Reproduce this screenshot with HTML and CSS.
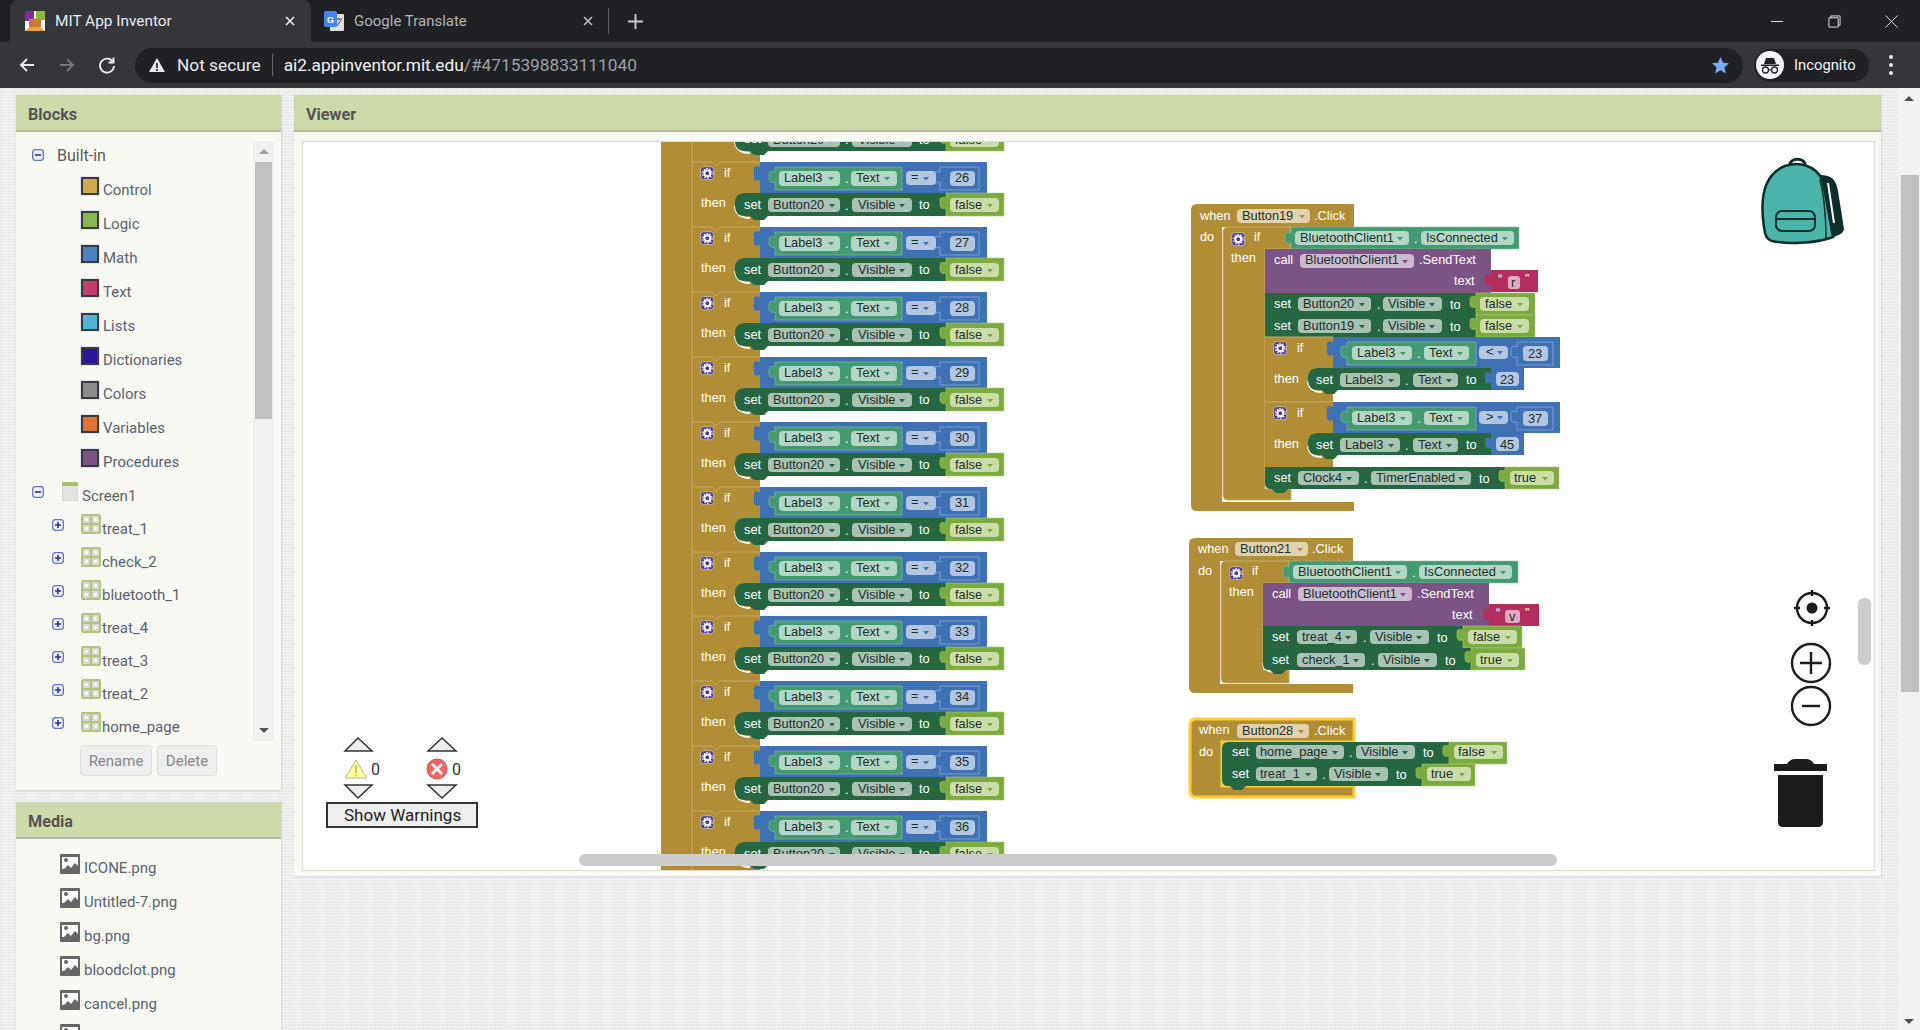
FILE: index.html
```html
<!DOCTYPE html>
<html lang="en">
<head>
<meta charset="utf-8">
<title>MIT App Inventor</title>
<link rel="stylesheet" href="styles.css">
</head>
<body>
<svg class="sprites" width="0" height="0" aria-hidden="true">
  <symbol id="i-minus" viewBox="0 0 12 12"><rect x=".7" y=".7" width="10.6" height="10.6" rx="2.5" fill="#eef0fb" stroke="#6672c8" stroke-width="1.3"/><path d="M3 6h6" stroke="#2a2f90" stroke-width="1.6"/></symbol>
  <symbol id="i-plus" viewBox="0 0 12 12"><rect x=".7" y=".7" width="10.6" height="10.6" rx="2.5" fill="#eef0fb" stroke="#6672c8" stroke-width="1.3"/><path d="M3 6h6M6 3v6" stroke="#2a2f90" stroke-width="1.6"/></symbol>
  <symbol id="i-arr" viewBox="0 0 20 20"><rect width="20" height="20" rx="2" fill="#b2c57a"/><rect x="2" y="2" width="7" height="7" rx="1" fill="#d8d8d8"/><rect x="11" y="2" width="7" height="7" rx="1" fill="#d8d8d8"/><rect x="2" y="11" width="7" height="7" rx="1" fill="#d8d8d8"/><rect x="11" y="11" width="7" height="7" rx="1" fill="#d8d8d8"/><rect x="4" y="4" width="3" height="3" fill="#fff"/><rect x="13" y="4" width="3" height="3" fill="#fff"/><rect x="4" y="13" width="3" height="3" fill="#fff"/><rect x="13" y="13" width="3" height="3" fill="#fff"/></symbol>
  <symbol id="i-img" viewBox="0 0 20 20"><rect width="20" height="20" rx="1" fill="#666"/><path d="M2 15V3h16v9l-3-3-4 5-3-3-4 4z" fill="#fff"/><circle cx="6" cy="6" r="2" fill="#666"/></symbol>
</svg>

<header class="chrome">
  <div class="tabs">
    <div class="tab active">
      <svg class="fav" viewBox="0 0 20 20"><rect width="20" height="20" fill="#fff"/><rect width="9" height="10" fill="#8d2a8f"/><rect x="11" width="9" height="9" fill="#8fb63e"/><rect x="4" y="8" width="12" height="8" fill="#c9793a"/><path d="M0 20l5-4h10l5 4z" fill="#f0a030"/></svg>
      <span class="tab-title">MIT App Inventor</span>
      <svg class="tab-x" viewBox="0 0 10 10"><path d="M1 1l8 8M9 1l-8 8"/></svg>
    </div>
    <div class="tab other">
      <svg class="fav" viewBox="0 0 20 20"><rect x="6" y="3" width="14" height="17" rx="1" fill="#ddd"/><rect width="13" height="16" rx="2" fill="#4285f4"/><path d="M12 8h6M15 7v2M13 15l4-6" stroke="#555" fill="none"/><text class="fav-g" x="3" y="12">G</text></svg>
      <span class="tab-title">Google Translate</span>
      <svg class="tab-x" viewBox="0 0 10 10"><path d="M1 1l8 8M9 1l-8 8"/></svg>
    </div>
    <span class="tab-sep"></span>
    <svg class="new-tab" viewBox="0 0 16 16"><path d="M8 1v14M1 8h14"/></svg>
    <div class="win">
      <svg viewBox="0 0 14 14"><path d="M0 7h13"/></svg>
      <svg viewBox="0 0 14 14"><path d="M3 3V1h10v10h-2M1 3h10v10H1z"/></svg>
      <svg viewBox="0 0 14 14"><path d="M.5.5l13 13M13.500.5l-13 13"/></svg>
    </div>
  </div>
  <div class="toolbar">
    <svg class="nav" viewBox="0 0 18 18"><path d="M16 9H3M9 3L3 9l6 6"/></svg>
    <svg class="nav dim" viewBox="0 0 18 18"><path d="M2 9h13M9 3l6 6-6 6"/></svg>
    <svg class="nav" viewBox="0 0 18 18"><path d="M15 6a7 7 0 1 0 1 4M15.500 1.500V6.500H10.500"/></svg>
    <div class="omni">
      <svg class="warn" viewBox="0 0 16 14"><path d="M8 0l8 14H0z" fill="#e8eaed"/><path d="M8 5v5M8 11v2" stroke="#202124" stroke-width="1.6"/></svg>
      <span class="ns">Not secure</span>
      <span class="omni-sep"></span>
      <span class="url">ai2.appinventor.mit.edu<span class="url-dim">/#4715398833111040</span></span>
      <svg class="star" viewBox="0 0 20 20"><path d="M10 1l2.700 6 6.300.6-4.800 4.300 1.500 6.400L10 14.900 4.300 18.300l1.500-6.400L1 7.600 7.300 7z" fill="#7baaf7"/></svg>
    </div>
    <div class="profile">
      <svg class="avatar" viewBox="0 0 28 28"><circle cx="14" cy="14" r="14" fill="#f1f3f4"/><path d="M10 7h8l2 6H8zM5 13.500h18v1.500H5z" fill="#202124"/><circle cx="9.500" cy="19" r="3" fill="none" stroke="#202124" stroke-width="1.300"/><circle cx="18.500" cy="19" r="3" fill="none" stroke="#202124" stroke-width="1.300"/><path d="M12.500 19h3" stroke="#202124"/></svg>
      <span>Incognito</span>
    </div>
    <div class="kebab"><i></i><i></i><i></i></div>
  </div>
</header>

<main class="page">
  <aside class="side">
    <section class="panel blocks-panel">
      <h2 class="head">Blocks</h2>
      <div class="tree-wrap">
        <div class="tree">
          <div class="row r-top"><svg class="tog"><use href="#i-minus"/></svg><span class="lbl-top">Built-in</span></div>
          <div class="row r-b"><i class="sw s1"></i>Control</div>
          <div class="row r-b"><i class="sw s2"></i>Logic</div>
          <div class="row r-b"><i class="sw s3"></i>Math</div>
          <div class="row r-b"><i class="sw s4"></i>Text</div>
          <div class="row r-b"><i class="sw s5"></i>Lists</div>
          <div class="row r-b"><i class="sw s6"></i>Dictionaries</div>
          <div class="row r-b"><i class="sw s7"></i>Colors</div>
          <div class="row r-b"><i class="sw s8"></i>Variables</div>
          <div class="row r-b"><i class="sw s9"></i>Procedures</div>
          <div class="row r-c r-screen"><svg class="tog"><use href="#i-minus"/></svg><svg class="scr" viewBox="0 0 16 19"><rect width="16" height="19" rx="2" fill="#e4e4e4" stroke="#ccc"/><path d="M0 2a2 2 0 0 1 2-2h12a2 2 0 0 1 2 2v2H0z" fill="#a9bf6a"/></svg>Screen1</div>
          <div class="row r-c"><svg class="tog"><use href="#i-plus"/></svg><svg class="arr"><use href="#i-arr"/></svg>treat_1</div>
          <div class="row r-c"><svg class="tog"><use href="#i-plus"/></svg><svg class="arr"><use href="#i-arr"/></svg>check_2</div>
          <div class="row r-c"><svg class="tog"><use href="#i-plus"/></svg><svg class="arr"><use href="#i-arr"/></svg>bluetooth_1</div>
          <div class="row r-c"><svg class="tog"><use href="#i-plus"/></svg><svg class="arr"><use href="#i-arr"/></svg>treat_4</div>
          <div class="row r-c"><svg class="tog"><use href="#i-plus"/></svg><svg class="arr"><use href="#i-arr"/></svg>treat_3</div>
          <div class="row r-c"><svg class="tog"><use href="#i-plus"/></svg><svg class="arr"><use href="#i-arr"/></svg>treat_2</div>
          <div class="row r-c"><svg class="tog"><use href="#i-plus"/></svg><svg class="arr"><use href="#i-arr"/></svg>home_page</div>
        </div>
        <div class="vbar"><span class="up"></span><span class="thumb"></span><span class="down"></span></div>
      </div>
      <div class="btns"><button class="btn">Rename</button><button class="btn">Delete</button></div>
    </section>
    <section class="panel media-panel">
      <h2 class="head">Media</h2>
      <div class="media">
        <div class="mrow"><svg class="img"><use href="#i-img"/></svg>ICONE.png</div>
        <div class="mrow"><svg class="img"><use href="#i-img"/></svg>Untitled-7.png</div>
        <div class="mrow"><svg class="img"><use href="#i-img"/></svg>bg.png</div>
        <div class="mrow"><svg class="img"><use href="#i-img"/></svg>bloodclot.png</div>
        <div class="mrow"><svg class="img"><use href="#i-img"/></svg>cancel.png</div>
        <div class="mrow"><svg class="img"><use href="#i-img"/></svg></div>
      </div>
    </section>
  </aside>

  <section class="panel viewer">
    <h2 class="head">Viewer</h2>
    <div class="canvas">
      <svg class="ws" viewBox="303 142 1571 728" width="1571" height="728">
        <defs>
          <path id="tri" d="M0 0h6l-3 3.500z"/>
          <g id="gear"><rect x=".7" y=".7" width="13" height="13" rx="3" fill="#4b3a9e" stroke="#c9b98a"/><circle cx="7.300" cy="7.300" r="3" fill="none" stroke="#fff" stroke-width="2"/><circle cx="7.300" cy="7.300" r="4.800" fill="none" stroke="#fff" stroke-width="1.200" stroke-dasharray="1.500 1.500"/></g>
          <g id="ifshape">
            <path class="hl" d="M692 0H712l4 4 4-4H760"/>
            <path class="blue" d="M760 0H987V31H760V18C752 21 754 14 754 11S752 2 760 5Z"/>
            <path class="gr" d="M775 5H902V28H775V20C768 22 769 16 769 14S768 8 775 10Z"/>
            <path class="blue bnum" d="M940 5H979V28H940V20C933 22 934 16 934 14S933 8 940 10Z"/>
            <rect class="pg" x="779" y="9" width="61" height="15" rx="4"/><use class="tg" href="#tri" x="828" y="15"/>
            <rect class="pg" x="851" y="9" width="46" height="15" rx="4"/><use class="tg" href="#tri" x="884" y="15"/>
            <rect class="pb" x="906" y="9" width="30" height="14" rx="4"/><use class="tb" href="#tri" x="923" y="15"/>
            <rect class="pb" x="950" y="9" width="25" height="15" rx="4"/>
            <path class="wh" d="M735 44Q736 56 750 56"/>
            <path class="set" d="M745 31H946V54H768L764 58H754L750 54H745Q735 54 735 44V41Q735 31 745 31Z"/>
            <path class="lime" d="M946 31H1004V54H946V46C939 48 940 42 940 40S939 34 946 36Z"/>
            <rect class="ps" x="768" y="36" width="72" height="14" rx="4"/><use class="ts" href="#tri" x="829" y="42"/>
            <rect class="ps" x="852" y="36" width="60" height="14" rx="4"/><use class="ts" href="#tri" x="899" y="42"/>
            <rect class="pl" x="950" y="36" width="49" height="14" rx="4"/><use class="tl" href="#tri" x="987" y="42"/>
            <use href="#gear" x="700" y="4"/>
          </g>
        </defs>

        <rect class="mus" x="661" y="100" width="99" height="800"/>
        <path class="hl" d="M692 100V900"/>

        <g transform="translate(0,97)"><use href="#ifshape"/><text class="w" x="744" y="46">set</text><text class="d" x="773" y="47">Button20</text><text class="w" x="845" y="47">.</text><text class="d" x="858" y="47">Visible</text><text class="w" x="919" y="47">to</text><text class="d" x="955" y="47">false</text><text class="w" x="701" y="45">then</text></g>
        <g transform="translate(0,162)"><use href="#ifshape"/><text class="w" x="724" y="15">if</text><text class="d" x="784" y="20">Label3</text><text class="w" x="845" y="21">.</text><text class="d" x="856" y="20">Text</text><text class="d" x="911" y="19">=</text><text class="d" x="955" y="20">26</text><text class="w" x="701" y="45">then</text><text class="w" x="744" y="47">set</text><text class="d" x="773" y="47">Button20</text><text class="w" x="845" y="48">.</text><text class="d" x="858" y="47">Visible</text><text class="w" x="919" y="47">to</text><text class="d" x="955" y="47">false</text></g>
        <g transform="translate(0,227)"><use href="#ifshape"/><text class="w" x="724" y="15">if</text><text class="d" x="784" y="20">Label3</text><text class="w" x="845" y="21">.</text><text class="d" x="856" y="20">Text</text><text class="d" x="911" y="19">=</text><text class="d" x="955" y="20">27</text><text class="w" x="701" y="45">then</text><text class="w" x="744" y="47">set</text><text class="d" x="773" y="47">Button20</text><text class="w" x="845" y="48">.</text><text class="d" x="858" y="47">Visible</text><text class="w" x="919" y="47">to</text><text class="d" x="955" y="47">false</text></g>
        <g transform="translate(0,292)"><use href="#ifshape"/><text class="w" x="724" y="15">if</text><text class="d" x="784" y="20">Label3</text><text class="w" x="845" y="21">.</text><text class="d" x="856" y="20">Text</text><text class="d" x="911" y="19">=</text><text class="d" x="955" y="20">28</text><text class="w" x="701" y="45">then</text><text class="w" x="744" y="47">set</text><text class="d" x="773" y="47">Button20</text><text class="w" x="845" y="48">.</text><text class="d" x="858" y="47">Visible</text><text class="w" x="919" y="47">to</text><text class="d" x="955" y="47">false</text></g>
        <g transform="translate(0,357)"><use href="#ifshape"/><text class="w" x="724" y="15">if</text><text class="d" x="784" y="20">Label3</text><text class="w" x="845" y="21">.</text><text class="d" x="856" y="20">Text</text><text class="d" x="911" y="19">=</text><text class="d" x="955" y="20">29</text><text class="w" x="701" y="45">then</text><text class="w" x="744" y="47">set</text><text class="d" x="773" y="47">Button20</text><text class="w" x="845" y="48">.</text><text class="d" x="858" y="47">Visible</text><text class="w" x="919" y="47">to</text><text class="d" x="955" y="47">false</text></g>
        <g transform="translate(0,422)"><use href="#ifshape"/><text class="w" x="724" y="15">if</text><text class="d" x="784" y="20">Label3</text><text class="w" x="845" y="21">.</text><text class="d" x="856" y="20">Text</text><text class="d" x="911" y="19">=</text><text class="d" x="955" y="20">30</text><text class="w" x="701" y="45">then</text><text class="w" x="744" y="47">set</text><text class="d" x="773" y="47">Button20</text><text class="w" x="845" y="48">.</text><text class="d" x="858" y="47">Visible</text><text class="w" x="919" y="47">to</text><text class="d" x="955" y="47">false</text></g>
        <g transform="translate(0,487)"><use href="#ifshape"/><text class="w" x="724" y="15">if</text><text class="d" x="784" y="20">Label3</text><text class="w" x="845" y="21">.</text><text class="d" x="856" y="20">Text</text><text class="d" x="911" y="19">=</text><text class="d" x="955" y="20">31</text><text class="w" x="701" y="45">then</text><text class="w" x="744" y="47">set</text><text class="d" x="773" y="47">Button20</text><text class="w" x="845" y="48">.</text><text class="d" x="858" y="47">Visible</text><text class="w" x="919" y="47">to</text><text class="d" x="955" y="47">false</text></g>
        <g transform="translate(0,552)"><use href="#ifshape"/><text class="w" x="724" y="15">if</text><text class="d" x="784" y="20">Label3</text><text class="w" x="845" y="21">.</text><text class="d" x="856" y="20">Text</text><text class="d" x="911" y="19">=</text><text class="d" x="955" y="20">32</text><text class="w" x="701" y="45">then</text><text class="w" x="744" y="47">set</text><text class="d" x="773" y="47">Button20</text><text class="w" x="845" y="48">.</text><text class="d" x="858" y="47">Visible</text><text class="w" x="919" y="47">to</text><text class="d" x="955" y="47">false</text></g>
        <g transform="translate(0,616)"><use href="#ifshape"/><text class="w" x="724" y="15">if</text><text class="d" x="784" y="20">Label3</text><text class="w" x="845" y="21">.</text><text class="d" x="856" y="20">Text</text><text class="d" x="911" y="19">=</text><text class="d" x="955" y="20">33</text><text class="w" x="701" y="45">then</text><text class="w" x="744" y="47">set</text><text class="d" x="773" y="47">Button20</text><text class="w" x="845" y="48">.</text><text class="d" x="858" y="47">Visible</text><text class="w" x="919" y="47">to</text><text class="d" x="955" y="47">false</text></g>
        <g transform="translate(0,681)"><use href="#ifshape"/><text class="w" x="724" y="15">if</text><text class="d" x="784" y="20">Label3</text><text class="w" x="845" y="21">.</text><text class="d" x="856" y="20">Text</text><text class="d" x="911" y="19">=</text><text class="d" x="955" y="20">34</text><text class="w" x="701" y="45">then</text><text class="w" x="744" y="47">set</text><text class="d" x="773" y="47">Button20</text><text class="w" x="845" y="48">.</text><text class="d" x="858" y="47">Visible</text><text class="w" x="919" y="47">to</text><text class="d" x="955" y="47">false</text></g>
        <g transform="translate(0,746)"><use href="#ifshape"/><text class="w" x="724" y="15">if</text><text class="d" x="784" y="20">Label3</text><text class="w" x="845" y="21">.</text><text class="d" x="856" y="20">Text</text><text class="d" x="911" y="19">=</text><text class="d" x="955" y="20">35</text><text class="w" x="701" y="45">then</text><text class="w" x="744" y="47">set</text><text class="d" x="773" y="47">Button20</text><text class="w" x="845" y="48">.</text><text class="d" x="858" y="47">Visible</text><text class="w" x="919" y="47">to</text><text class="d" x="955" y="47">false</text></g>
        <g transform="translate(0,811)"><use href="#ifshape"/><text class="w" x="724" y="15">if</text><text class="d" x="784" y="20">Label3</text><text class="w" x="845" y="21">.</text><text class="d" x="856" y="20">Text</text><text class="d" x="911" y="19">=</text><text class="d" x="955" y="20">36</text><text class="w" x="701" y="45">then</text><text class="w" x="744" y="47">set</text><text class="d" x="773" y="47">Button20</text><text class="w" x="845" y="48">.</text><text class="d" x="858" y="47">Visible</text><text class="w" x="919" y="47">to</text><text class="d" x="955" y="47">false</text></g>

        <!-- Button19.Click -->
        <g>
          <path class="mus" d="M1197 204H1354V227H1222V502H1354V511H1197Q1191 511 1191 505V210Q1191 204 1197 204Z"/>
          <path class="mus hlf" d="M1228 227H1291V249H1265V489H1291V500H1228Q1223 500 1223 495V232Q1223 227 1228 227Z"/>
          <text class="w" x="1200" y="220">when</text><rect class="pm" x="1237" y="209" width="73" height="14" rx="4"/><text class="d" x="1242" y="220">Button19</text><use class="tm" href="#tri" x="1299" y="215"/><text class="w" x="1314" y="220">.Click</text>
          <text class="w" x="1200" y="241">do</text><use href="#gear" x="1231" y="232"/><text class="w" x="1254" y="241">if</text><text class="w" x="1231" y="262">then</text>
          <path class="gr" d="M1291 227H1519V249H1291V243C1284 245 1285 239 1285 237S1284 231 1291 233Z"/>
          <rect class="pg" x="1295" y="231" width="114" height="14" rx="4"/><text class="d" x="1300" y="242">BluetoothClient1</text><use class="tg" href="#tri" x="1397" y="237"/><text class="w" x="1414" y="243">.</text>
          <rect class="pg" x="1421" y="231" width="93" height="14" rx="4"/><text class="d" x="1426" y="242">IsConnected</text><use class="tg" href="#tri" x="1502" y="237"/>
          <path class="pur" d="M1265 249H1491V293H1265Z"/><text class="w" x="1274" y="264">call</text>
          <rect class="pp" x="1300" y="254" width="114" height="14" rx="4"/><text class="d" x="1305" y="264">BluetoothClient1</text><use class="tp" href="#tri" x="1402" y="260"/><text class="w" x="1419" y="264">.SendText</text><text class="w" x="1454" y="285">text</text>
          <path class="red" d="M1491 270H1538V292H1491V285C1484 287 1485 281 1485 279S1484 273 1491 275Z"/><text class="w" x="1498" y="283">“</text><rect class="pr" x="1508" y="276" width="12" height="13" rx="3"/><text class="d" x="1511" y="287">r</text><text class="w" x="1525" y="283">”</text>

          <path class="set" d="M1265 293H1476V315H1265Z"/><path class="lime" d="M1476 293H1535V315H1476V307C1469 309 1470 303 1470 301S1469 295 1476 297Z"/>
          <text class="w" x="1274" y="308">set</text><rect class="ps" x="1298" y="297" width="73" height="14" rx="4"/><text class="d" x="1303" y="308">Button20</text><use class="ts" href="#tri" x="1359" y="303"/><text class="w" x="1377" y="309">.</text><rect class="ps" x="1383" y="297" width="59" height="14" rx="4"/><text class="d" x="1388" y="308">Visible</text><use class="ts" href="#tri" x="1429" y="303"/><text class="w" x="1450" y="309">to</text><rect class="pl" x="1480" y="297" width="49" height="14" rx="4"/><text class="d" x="1485" y="308">false</text><use class="tl" href="#tri" x="1517" y="303"/>
          <path class="set" d="M1265 315H1476V337H1265Z"/><path class="lime" d="M1476 315H1535V337H1476V329C1469 331 1470 325 1470 323S1469 317 1476 319Z"/>
          <text class="w" x="1274" y="330">set</text><rect class="ps" x="1298" y="319" width="73" height="14" rx="4"/><text class="d" x="1303" y="330">Button19</text><use class="ts" href="#tri" x="1359" y="325"/><text class="w" x="1377" y="331">.</text><rect class="ps" x="1383" y="319" width="59" height="14" rx="4"/><text class="d" x="1388" y="330">Visible</text><use class="ts" href="#tri" x="1429" y="325"/><text class="w" x="1450" y="331">to</text><rect class="pl" x="1480" y="319" width="49" height="14" rx="4"/><text class="d" x="1485" y="330">false</text><use class="tl" href="#tri" x="1517" y="325"/>

          <path class="mus" d="M1265 337H1333V467H1265Z"/>
          <g id="nest1">
            <path class="hl" d="M1265 337H1333"/><use href="#gear" x="1273" y="341"/><text class="w" x="1297" y="352">if</text><text class="w" x="1274" y="383">then</text>
            <path class="blue" d="M1333 337H1560V368H1333V355C1325 358 1327 351 1327 348S1325 339 1333 342Z"/>
            <path class="gr" d="M1347 342H1476V365H1347V357C1340 359 1341 353 1341 351S1340 345 1347 347Z"/>
            <rect class="pg" x="1352" y="346" width="60" height="14" rx="4"/><text class="d" x="1357" y="357">Label3</text><use class="tg" href="#tri" x="1400" y="352"/><text class="w" x="1417" y="358">.</text>
            <rect class="pg" x="1424" y="346" width="45" height="14" rx="4"/><text class="d" x="1429" y="357">Text</text><use class="tg" href="#tri" x="1457" y="352"/>
            <rect class="pb" x="1479" y="346" width="29" height="13" rx="4"/><text class="d" x="1486" y="356">&lt;</text><use class="tb" href="#tri" x="1497" y="351"/>
            <path class="blue bnum" d="M1517 342H1553V365H1517V357C1510 359 1511 353 1511 351S1510 345 1517 347Z"/><rect class="pb" x="1523" y="346" width="25" height="15" rx="4"/><text class="d" x="1528" y="358">23</text>
            <path class="wh" d="M1308 381Q1309 392 1322 392"/>
            <path class="set" d="M1318 368H1491V390H1338L1334 394H1326L1322 390H1318Q1308 390 1308 380V378Q1308 368 1318 368Z"/>
            <text class="w" x="1316" y="384">set</text><rect class="ps" x="1340" y="373" width="60" height="14" rx="4"/><text class="d" x="1345" y="384">Label3</text><use class="ts" href="#tri" x="1388" y="379"/><text class="w" x="1405" y="385">.</text><rect class="ps" x="1413" y="373" width="45" height="14" rx="4"/><text class="d" x="1418" y="384">Text</text><use class="ts" href="#tri" x="1446" y="379"/><text class="w" x="1466" y="384">to</text>
            <path class="blue" d="M1491 368H1524V390H1491V383C1484 385 1485 379 1485 377S1484 371 1491 373Z"/><rect class="pb" x="1496" y="372" width="23" height="14" rx="4"/><text class="d" x="1500" y="384">23</text>
          </g>
          <g transform="translate(0,65)">
            <path class="hl" d="M1265 337H1333"/><use href="#gear" x="1273" y="341"/><text class="w" x="1297" y="352">if</text><text class="w" x="1274" y="383">then</text>
            <path class="blue" d="M1333 337H1560V368H1333V355C1325 358 1327 351 1327 348S1325 339 1333 342Z"/>
            <path class="gr" d="M1347 342H1476V365H1347V357C1340 359 1341 353 1341 351S1340 345 1347 347Z"/>
            <rect class="pg" x="1352" y="346" width="60" height="14" rx="4"/><text class="d" x="1357" y="357">Label3</text><use class="tg" href="#tri" x="1400" y="352"/><text class="w" x="1417" y="358">.</text>
            <rect class="pg" x="1424" y="346" width="45" height="14" rx="4"/><text class="d" x="1429" y="357">Text</text><use class="tg" href="#tri" x="1457" y="352"/>
            <rect class="pb" x="1479" y="346" width="29" height="13" rx="4"/><text class="d" x="1486" y="356">&gt;</text><use class="tb" href="#tri" x="1497" y="351"/>
            <path class="blue bnum" d="M1517 342H1553V365H1517V357C1510 359 1511 353 1511 351S1510 345 1517 347Z"/><rect class="pb" x="1523" y="346" width="25" height="15" rx="4"/><text class="d" x="1528" y="358">37</text>
            <path class="wh" d="M1308 381Q1309 392 1322 392"/>
            <path class="set" d="M1318 368H1491V390H1338L1334 394H1326L1322 390H1318Q1308 390 1308 380V378Q1308 368 1318 368Z"/>
            <text class="w" x="1316" y="384">set</text><rect class="ps" x="1340" y="373" width="60" height="14" rx="4"/><text class="d" x="1345" y="384">Label3</text><use class="ts" href="#tri" x="1388" y="379"/><text class="w" x="1405" y="385">.</text><rect class="ps" x="1413" y="373" width="45" height="14" rx="4"/><text class="d" x="1418" y="384">Text</text><use class="ts" href="#tri" x="1446" y="379"/><text class="w" x="1466" y="384">to</text>
            <path class="blue" d="M1491 368H1524V390H1491V383C1484 385 1485 379 1485 377S1484 371 1491 373Z"/><rect class="pb" x="1496" y="372" width="23" height="14" rx="4"/><text class="d" x="1500" y="384">45</text>
          </g>
          <path class="set" d="M1265 467H1505V489H1288L1284 493H1276L1272 489H1271Q1265 489 1265 483Z"/><path class="lime" d="M1505 467H1559V489H1505V481C1498 483 1499 477 1499 475S1498 469 1505 471Z"/>
          <text class="w" x="1274" y="482">set</text><rect class="ps" x="1298" y="471" width="61" height="14" rx="4"/><text class="d" x="1303" y="482">Clock4</text><use class="ts" href="#tri" x="1346" y="477"/><text class="w" x="1364" y="483">.</text><rect class="ps" x="1371" y="471" width="100" height="14" rx="4"/><text class="d" x="1376" y="482">TimerEnabled</text><use class="ts" href="#tri" x="1458" y="477"/><text class="w" x="1479" y="483">to</text><rect class="pl" x="1510" y="471" width="44" height="14" rx="4"/><text class="d" x="1514" y="482">true</text><use class="tl" href="#tri" x="1542" y="477"/>
        </g>

        <!-- Button21.Click -->
        <g transform="translate(-2,334)">
          <path class="mus" d="M1197 204H1355V227H1222V350H1355V359H1197Q1191 359 1191 353V210Q1191 204 1197 204Z"/>
          <path class="mus hlf" d="M1228 227H1291V249H1265V336H1291V349H1228Q1223 349 1223 344V232Q1223 227 1228 227Z"/>
          <text class="w" x="1200" y="219">when</text><rect class="pm" x="1237" y="208" width="73" height="14" rx="4"/><text class="d" x="1242" y="219">Button21</text><use class="tm" href="#tri" x="1299" y="214"/><text class="w" x="1314" y="219">.Click</text>
          <text class="w" x="1200" y="241">do</text><use href="#gear" x="1231" y="232"/><text class="w" x="1254" y="241">if</text><text class="w" x="1231" y="262">then</text>
          <path class="gr" d="M1291 227H1520V249H1291V243C1284 245 1285 239 1285 237S1284 231 1291 233Z"/>
          <rect class="pg" x="1295" y="231" width="114" height="14" rx="4"/><text class="d" x="1300" y="242">BluetoothClient1</text><use class="tg" href="#tri" x="1397" y="237"/><text class="w" x="1414" y="243">.</text>
          <rect class="pg" x="1421" y="231" width="93" height="14" rx="4"/><text class="d" x="1426" y="242">IsConnected</text><use class="tg" href="#tri" x="1502" y="237"/>
          <path class="pur" d="M1265 249H1491V292H1265Z"/><text class="w" x="1274" y="264">call</text>
          <rect class="pp" x="1300" y="253" width="114" height="14" rx="4"/><text class="d" x="1305" y="264">BluetoothClient1</text><use class="tp" href="#tri" x="1402" y="259"/><text class="w" x="1419" y="264">.SendText</text><text class="w" x="1454" y="285">text</text>
          <path class="red" d="M1491 270H1541V292H1491V285C1484 287 1485 281 1485 279S1484 273 1491 275Z"/><text class="w" x="1498" y="283">“</text><rect class="pr" x="1507" y="276" width="15" height="13" rx="3"/><text class="d" x="1511" y="287">v</text><text class="w" x="1527" y="283">”</text>
          <path class="set" d="M1265 292H1465V314H1265Z"/><path class="lime" d="M1465 292H1524V314H1465V306C1458 308 1459 302 1459 300S1458 294 1465 296Z"/>
          <text class="w" x="1274" y="307">set</text><rect class="ps" x="1299" y="296" width="60" height="14" rx="4"/><text class="d" x="1304" y="307">treat_4</text><use class="ts" href="#tri" x="1347" y="302"/><text class="w" x="1365" y="308">.</text><rect class="ps" x="1372" y="296" width="59" height="14" rx="4"/><text class="d" x="1377" y="307">Visible</text><use class="ts" href="#tri" x="1418" y="302"/><text class="w" x="1439" y="308">to</text><rect class="pl" x="1470" y="296" width="49" height="14" rx="4"/><text class="d" x="1475" y="307">false</text><use class="tl" href="#tri" x="1507" y="302"/>
          <path class="wh" d="M1265 329Q1266 338 1278 338"/>
          <path class="set" d="M1265 314H1473V336H1288L1284 340H1276L1272 336H1271Q1265 336 1265 330Z"/><path class="lime" d="M1473 314H1527V336H1473V328C1466 330 1467 324 1467 322S1466 316 1473 318Z"/>
          <text class="w" x="1274" y="330">set</text><rect class="ps" x="1299" y="319" width="68" height="14" rx="4"/><text class="d" x="1304" y="330">check_1</text><use class="ts" href="#tri" x="1355" y="325"/><text class="w" x="1373" y="331">.</text><rect class="ps" x="1380" y="319" width="59" height="14" rx="4"/><text class="d" x="1385" y="330">Visible</text><use class="ts" href="#tri" x="1426" y="325"/><text class="w" x="1447" y="331">to</text><rect class="pl" x="1478" y="319" width="43" height="14" rx="4"/><text class="d" x="1482" y="330">true</text><use class="tl" href="#tri" x="1509" y="325"/>
        </g>

        <!-- Button28.Click -->
        <g>
          <path class="mus sel" d="M1196 719H1354V742H1222V786H1354V797H1196Q1190 797 1190 791V725Q1190 719 1196 719Z"/>
          <text class="w" x="1199" y="734">when</text><rect class="pm" x="1237" y="724" width="72" height="14" rx="4"/><text class="d" x="1242" y="735">Button28</text><use class="tm" href="#tri" x="1298" y="730"/><text class="w" x="1314" y="735">.Click</text>
          <text class="w" x="1199" y="756">do</text>
          <path class="set" d="M1228 742H1449V764H1222V748Q1222 742 1228 742Z"/><path class="lime" d="M1449 742H1507V764H1449V756C1442 758 1443 752 1443 750S1442 744 1449 746Z"/>
          <text class="w" x="1232" y="756">set</text><rect class="ps" x="1256" y="745" width="88" height="14" rx="4"/><text class="d" x="1260" y="756">home_page</text><use class="ts" href="#tri" x="1332" y="751"/><text class="w" x="1349" y="757">.</text><rect class="ps" x="1356" y="745" width="59" height="14" rx="4"/><text class="d" x="1361" y="756">Visible</text><use class="ts" href="#tri" x="1402" y="751"/><text class="w" x="1423" y="757">to</text><rect class="pl" x="1454" y="745" width="49" height="14" rx="4"/><text class="d" x="1458" y="756">false</text><use class="tl" href="#tri" x="1491" y="751"/>
          <path class="set" d="M1222 764H1422V786H1246L1242 790H1234L1230 786H1228Q1222 786 1222 780Z"/><path class="lime" d="M1422 764H1475V786H1422V778C1415 780 1416 774 1416 772S1415 766 1422 768Z"/>
          <text class="w" x="1232" y="778">set</text><rect class="ps" x="1256" y="767" width="61" height="14" rx="4"/><text class="d" x="1260" y="778">treat_1</text><use class="ts" href="#tri" x="1305" y="773"/><text class="w" x="1322" y="779">.</text><rect class="ps" x="1329" y="767" width="59" height="14" rx="4"/><text class="d" x="1334" y="778">Visible</text><use class="ts" href="#tri" x="1375" y="773"/><text class="w" x="1396" y="779">to</text><rect class="pl" x="1427" y="767" width="44" height="14" rx="4"/><text class="d" x="1431" y="778">true</text><use class="tl" href="#tri" x="1459" y="773"/>
        </g>

        <!-- workspace furniture -->
        <rect class="sb" x="579" y="854" width="978" height="12" rx="6"/>
        <rect class="sb" x="1858" y="598" width="13" height="67" rx="6"/>

        <g class="warnui">
          <path class="tr" d="M345 751L358 738L372 751Z"/><path class="tr" d="M345 785H372L358 798Z"/>
          <path class="tr" d="M428 751L442 738L456 751Z"/><path class="tr" d="M428 785H456L442 798Z"/>
          <path d="M356 760L367 778H345Z" fill="#ffff99" stroke="#b5b5a0"/><path d="M356 765V773M356 774.500V776.500" stroke="#8a8a50"/>
          <text class="n" x="371" y="775">0</text>
          <circle cx="437" cy="769" r="10" fill="#f26666" stroke="#c85050"/><path d="M432 764L442 774M442 764L432 774" stroke="#fff" stroke-width="2.500"/>
          <text class="n" x="452" y="775">0</text>
          <rect x="327" y="803" width="150" height="24" fill="#eee" stroke="#333" stroke-width="2"/>
          <text class="sw-t" x="344" y="821">Show Warnings</text>
        </g>

        <g class="pack" transform="translate(0,1)">
          <path d="M1820 175C1832 175 1835 180 1837 190L1843 228C1843 232 1838 233 1832 236Z" fill="#0d2e2a" stroke="#0d2e2a" stroke-width="2"/>
          <path d="M1828 182L1834 222" stroke="#fff" stroke-width="2"/>
          <path d="M1790 165C1789 156 1806 156 1805 165" fill="none" stroke="#0d2e2a" stroke-width="3"/>
          <path d="M1765 232C1760 205 1760 175 1785 165C1800 160 1815 165 1822 178C1826 195 1830 220 1833 236C1815 243 1785 243 1772 240C1768 239 1766 236 1765 232Z" fill="#4cb5ab" stroke="#0d2e2a" stroke-width="2.500"/>
          <path d="M1820 178C1824 195 1826 220 1826 238" fill="none" stroke="#0d2e2a" stroke-width="1.500"/>
          <rect x="1776" y="210" width="39" height="20" rx="6" fill="#4cb5ab" stroke="#0d2e2a" stroke-width="2"/>
          <path d="M1776 218H1815" stroke="#0d2e2a" stroke-width="2"/>
        </g>

        <g class="ctl">
          <circle cx="1812" cy="608" r="15"/><circle class="f" cx="1812" cy="608" r="5.500"/><path d="M1812 590V596M1812 620V626M1794 608H1800M1824 608H1830"/>
          <circle cx="1811" cy="663" r="19"/><path d="M1811 652V674M1800 663H1822"/>
          <circle cx="1811" cy="706" r="19"/><path d="M1802 706H1820"/>
          <path class="f" d="M1774 764H1787Q1790 759 1795 759H1806Q1811 759 1814 764H1827V771H1774Z"/>
          <path class="f" d="M1778 775H1823V822Q1823 827 1818 827H1783Q1778 827 1778 822Z"/>
        </g>
      </svg>
    </div>
  </section>

  <div class="pagebar"><span class="up"></span><span class="thumb"></span><span class="down"></span></div>
</main>
</body>
</html>
```
FILE: styles.css
```css
* { box-sizing: border-box; }
html, body { margin: 0; height: 1030px; overflow: hidden; }
body { font-family: Roboto, "Liberation Sans", sans-serif; display: flex; flex-direction: column; background: #eee; }
.sprites { position: absolute; }

/* browser chrome */
.chrome { background: #202124; color: #e8eaed; flex: none; }
.tabs { height: 42px; display: flex; align-items: center; padding-left: 10px; }
.tab { height: 42px; display: flex; align-items: center; font-size: 15.400px; }
.tab.active { width: 301px; padding-left: 15px; background: #35363a; border-radius: 8px 8px 0 0; color: #e8eaed; }
.tab.other { width: 297px; padding-left: 13px; color: #b0b3b8; }
.fav { width: 20px; height: 20px; margin-right: 10px; flex: none; }
.fav-g { fill: #fff; font: bold 9px "Liberation Sans", sans-serif; }
.tab-title { width: 225px; }
.tab-x { width: 10px; height: 10px; margin-left: 5px; fill: none; stroke: #e8eaed; stroke-width: 1.600; }
.tab.other .tab-title { width: 224px; font-size: 15px; }
.tab.other .tab-x { stroke: #bdc1c6; }
.tab-sep { width: 1px; height: 26px; background: #5f6368; }
.new-tab { width: 17px; height: 17px; margin-left: 18px; fill: none; stroke: #c8cacd; stroke-width: 1.800; }
.win { margin-left: auto; display: flex; gap: 44px; padding-right: 22px; }
.win svg { width: 13px; height: 13px; fill: none; stroke: #e8eaed; stroke-width: 1; }
.toolbar { height: 46px; background: #35363a; display: flex; align-items: center; padding-left: 18px; }
.nav { width: 18px; height: 18px; margin-right: 22px; fill: none; stroke: #e8eaed; stroke-width: 1.900; flex: none; }
.nav.dim { stroke: #75787c; }
.nav:nth-child(3) { margin-right: 19px; }
.omni { width: 1608px; height: 35px; background: #202124; border-radius: 18px; display: flex; align-items: center; padding-left: 14px; font-size: 17.300px; margin-right: 11px; }
.warn { width: 16px; height: 14px; margin-right: 12px; }
.ns { color: #e8eaed; }
.omni-sep { width: 1px; height: 22px; background: #6a6d72; margin: 0 11px 0 11px; }
.url { color: #f1f3f4; }
.url-dim { color: #9aa0a6; }
.star { width: 19px; height: 19px; margin-left: auto; margin-right: 13px; }
.profile { width: 115px; height: 33px; background: #202124; border-radius: 17px; display: flex; align-items: center; padding-left: 2px; font-size: 14.800px; color: #f1f3f4; gap: 10px; }
.avatar { width: 28px; height: 28px; }
.kebab { margin-left: 20px; display: flex; flex-direction: column; gap: 4px; }
.kebab i { width: 4px; height: 4px; border-radius: 50%; background: #e8eaed; display: block; }

/* page */
.page {
  flex: 1; min-height: 0; display: flex; align-items: flex-start; padding: 7px 0 0 16px; position: relative;
  background-color: #ececec;
  background-image:
    repeating-linear-gradient(0deg, rgba(255,255,255,.45) 0 1px, transparent 1px 3px),
    repeating-linear-gradient(90deg, rgba(0,0,0,.025) 0 1px, transparent 1px 3px);
}
.side { width: 266px; margin-right: 12px; flex: none; display: flex; flex-direction: column; gap: 11px; }
.panel { background: #f8f9f3; border: 1px solid #dcdcdc; border-width: 0 1px 1px 0; box-shadow: 0 0 1px #ccc; }
.head { margin: 0; height: 37px; padding: 4px 0 0 12px; background: #cddbaa; border-bottom: 2px solid #b4b9a4; font-size: 16.200px; font-weight: 700; color: #555; display: flex; align-items: center; }
.blocks-panel { height: 696px; }
.media-panel { height: 260px; overflow: hidden; }

.tree-wrap { display: flex; height: 603px; margin-top: 7px; overflow: hidden; position: relative; }
.tree { width: 237px; flex: none; font-size: 15px; color: #5a6270; }
.row { display: flex; align-items: center; }
.r-top { height: 34px; padding-left: 16px; color: #5f5a58; }
.tog { width: 12px; height: 12px; flex: none; margin-top: -3px; }
.lbl-top { margin-left: 13px; margin-top: -2px; font-size: 16px; }
.r-b { height: 34px; padding-left: 65px; }
.sw { width: 18px; height: 18px; margin: -9px 4px 0 0; border: 2px solid #3a3a3a; outline: 1px solid #e0e6f0; flex: none; display: block; }
.s1 { background: #ceab4a; } .s2 { background: #88b650; } .s3 { background: #4e83c1; }
.s4 { background: #c23c6c; } .s5 { background: #50b3db; } .s6 { background: #2d1799; }
.s7 { background: #8c8c8c; } .s8 { background: #e07135; } .s9 { background: #7c5385; }
.r-c { height: 33px; padding-left: 36px; }
.r-c .tog { margin-top: -7px; }
.arr { width: 20px; height: 20px; margin: -9px 1px 0 17px; flex: none; }
.r-screen { padding-left: 16px; }
.scr { width: 16px; height: 19px; margin: -8px 4px 0 18px; flex: none; }
.vbar { width: 21px; background: #f1f1f1; position: relative; flex: none; height: 600px; margin-top: 2px; }
.vbar .thumb { position: absolute; left: 2px; right: 2px; top: 21px; height: 257px; background: #c1c1c1; }
.up, .down { position: absolute; width: 0; height: 0; border-left: 5px solid transparent; border-right: 5px solid transparent; }
.vbar .up { left: 6px; top: 8px; border-bottom: 5px solid #a3a3a3; }
.vbar .down { left: 6px; bottom: 8px; border-top: 5px solid #505050; }
.btns { display: flex; gap: 5px; padding: 3px 0 0 64px; }
.btn { height: 31px; padding: 0; border: 1px solid #ddd; border-radius: 4px; background: #eee; color: #888; font: 15px Roboto, sans-serif; }
.btn:first-child { width: 72px; }
.btn:last-child { width: 60px; }

.media { padding-top: 12px; font-size: 15px; color: #5a6270; }
.mrow { height: 34px; display: flex; align-items: center; padding-left: 44px; }
.img { width: 20px; height: 20px; margin: -8px 4px 0 0; flex: none; }

/* viewer */
.viewer { width: 1588px; height: 782px; flex: none; }
.canvas { margin: 9px 0 0 8px; width: 1573px; height: 730px; background: #fff; border: 1px solid #dcdcd6; overflow: hidden; }
.ws { display: block; font: 12.800px "Liberation Sans", Arial, sans-serif; }
.w { fill: #fff; }
.d { fill: #20302a; }
.mus { fill: #b18e35; }
.hl { fill: none; stroke: #c6ab66; stroke-width: 1; }
.hlf { stroke: #c6ab66; stroke-width: 1; }
.wh { fill: none; stroke: #fff; stroke-width: 2; }
.blue { fill: #3f71b5; }
.bnum { stroke: #8aa8d2; stroke-width: .8; }
.gr { fill: #439970; stroke: #8cc4a8; stroke-width: .6; }
.set { fill: #266640; }
.lime { fill: #7bab3e; stroke: #a8c97e; stroke-width: .6; }
.pur { fill: #7c5385; }
.red { fill: #b32d5e; }
.sel { stroke: #fc3; stroke-width: 3; }
.pg { fill: #b4d6c6; } .tg { fill: #439970; }
.pb { fill: #b2c6e1; } .tb { fill: #3f71b5; }
.ps { fill: #a8c2b4; } .ts { fill: #266640; }
.pl { fill: #cadda8; } .tl { fill: #7bab3e; }
.pm { fill: #e0d2ae; } .tm { fill: #b18e35; }
.pp { fill: #cbbad0; } .tp { fill: #7c5385; }
.pr { fill: #e1abbf; }
.sb { fill: #ccc; }
.tr { fill: #eee; stroke: #333; stroke-width: 1.500; }
.n { font: 16px Roboto, sans-serif; fill: #333; }
.sw-t { font: 17px Roboto, sans-serif; fill: #222; }
.ctl circle, .ctl path { fill: none; stroke: #1c1c1c; stroke-width: 2.400; }
.ctl .f { fill: #1c1c1c; stroke: none; }

.pagebar { position: absolute; right: 0; top: 0; bottom: 0; width: 21px; background: #f1f1f1; }
.pagebar .thumb { position: absolute; left: 2px; right: 1px; top: 87px; height: 517px; background: #c1c1c1; }
.pagebar .up { left: 5px; top: 8px; border-bottom: 5px solid #505050; }
.pagebar .down { left: 5px; bottom: 6px; border-top: 5px solid #505050; }
```
